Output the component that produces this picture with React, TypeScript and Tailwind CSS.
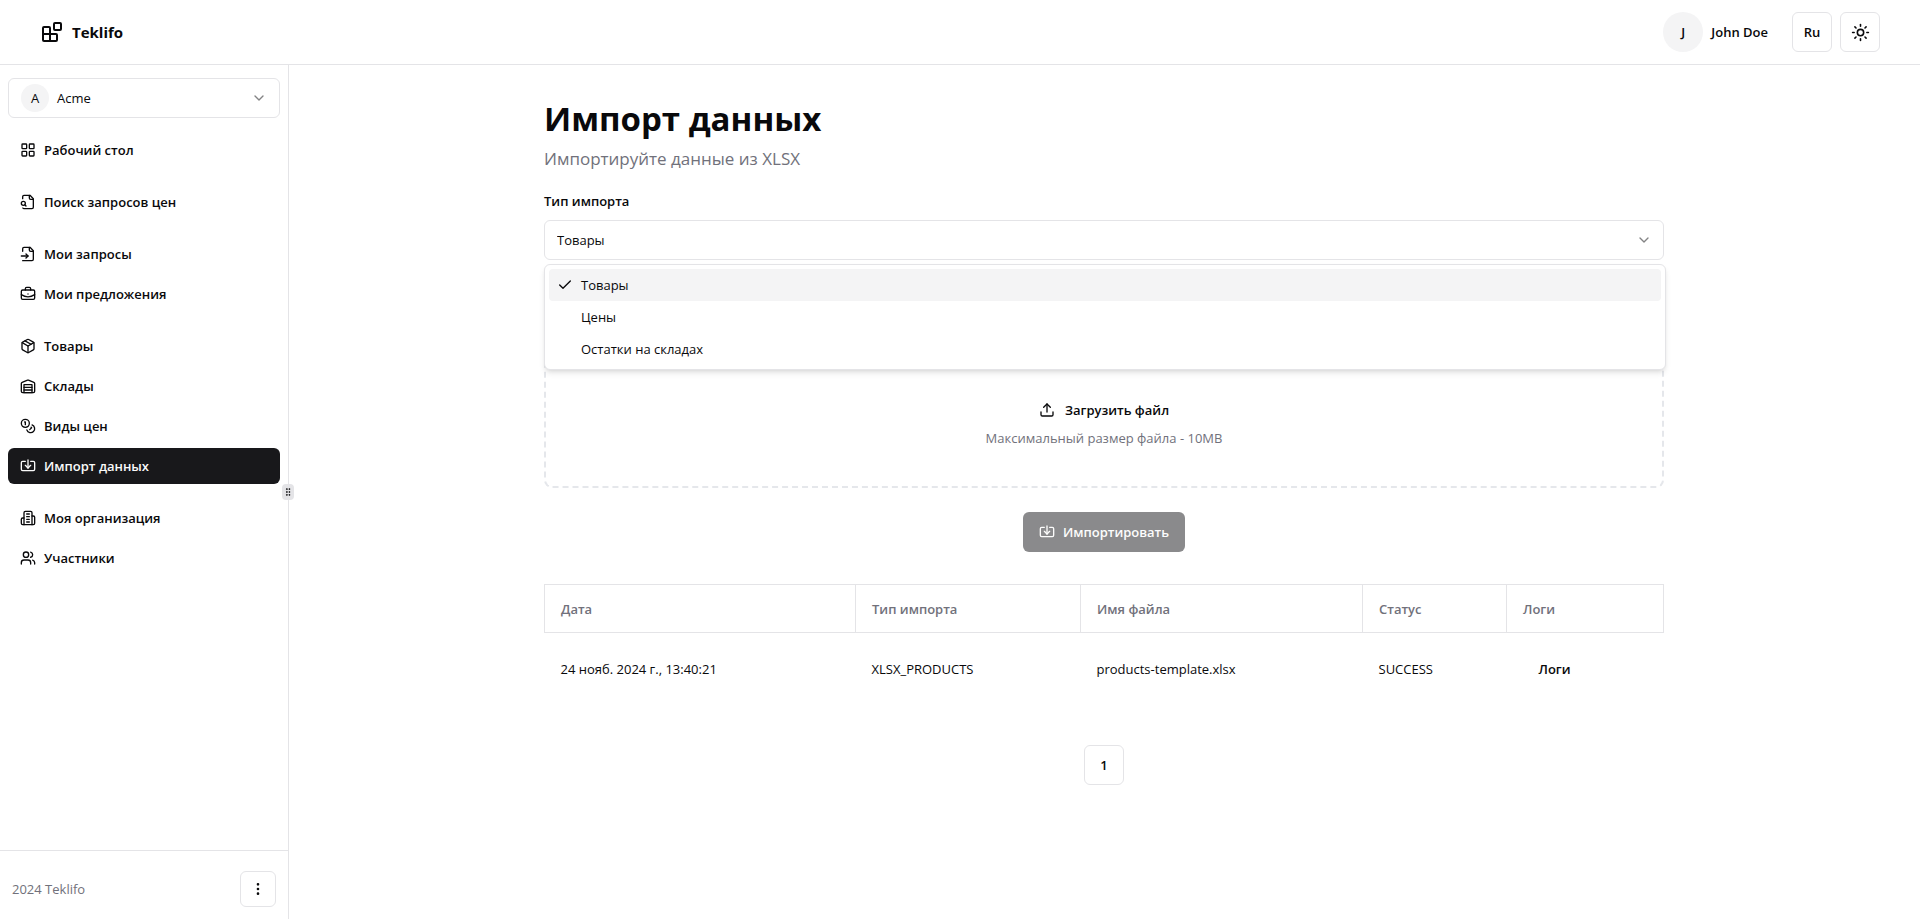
import type { ReactNode, SVGProps } from "react";
import {
  BriefcaseBusiness,
  Check,
  ChevronDown,
  EllipsisVertical,
  GripVertical,
  Import,
  LayoutGrid,
  Sun,
  Upload,
  Users,
} from "lucide-react";

function Icon({ children, ...props }: SVGProps<SVGSVGElement> & { children: ReactNode }) {
  return (
    <svg
      viewBox="0 0 24 24"
      fill="none"
      stroke="currentColor"
      strokeWidth={2}
      strokeLinecap="round"
      strokeLinejoin="round"
      aria-hidden="true"
      {...props}
    >
      {children}
    </svg>
  );
}

function BlocksIcon({ className }: { className?: string }) {
  return (
    <Icon className={className}>
      <rect width="7" height="7" x="14" y="3" rx="1" />
      <path d="M10 21V8a1 1 0 0 0-1-1H4a1 1 0 0 0-1 1v12a1 1 0 0 0 1 1h12a1 1 0 0 0 1-1v-5a1 1 0 0 0-1-1H3" />
    </Icon>
  );
}

function FileSearchIcon({ className }: { className?: string }) {
  return (
    <Icon className={className}>
      <path d="M14 2v4a2 2 0 0 0 2 2h4" />
      <path d="M4.268 21a2 2 0 0 0 1.727 1H18a2 2 0 0 0 2-2V7l-5-5H6a2 2 0 0 0-2 2v3" />
      <path d="m9 18-1.5-1.5" />
      <circle cx="5" cy="14" r="3" />
    </Icon>
  );
}

function FileInputIcon({ className }: { className?: string }) {
  return (
    <Icon className={className}>
      <path d="M4 22h14a2 2 0 0 0 2-2V7l-5-5H6a2 2 0 0 0-2 2v4" />
      <path d="M14 2v4a2 2 0 0 0 2 2h4" />
      <path d="M2 15h10" />
      <path d="m9 18 3-3-3-3" />
    </Icon>
  );
}

function PackageIcon({ className }: { className?: string }) {
  return (
    <Icon className={className}>
      <path d="m7.5 4.27 9 5.15" />
      <path d="M21 8a2 2 0 0 0-1-1.73l-7-4a2 2 0 0 0-2 0l-7 4A2 2 0 0 0 3 8v8a2 2 0 0 0 1 1.73l7 4a2 2 0 0 0 2 0l7-4A2 2 0 0 0 21 16Z" />
      <path d="m3.3 7 8.7 5 8.7-5" />
      <path d="M12 22V12" />
    </Icon>
  );
}

function WarehouseIcon({ className }: { className?: string }) {
  return (
    <Icon className={className}>
      <path d="M22 8.35V20a2 2 0 0 1-2 2H4a2 2 0 0 1-2-2V8.35A2 2 0 0 1 3.26 6.5l8-3.2a2 2 0 0 1 1.48 0l8 3.2A2 2 0 0 1 22 8.35Z" />
      <path d="M6 18h12" />
      <path d="M6 14h12" />
      <rect width="12" height="12" x="6" y="10" />
    </Icon>
  );
}

function CoinsIcon({ className }: { className?: string }) {
  return (
    <Icon className={className}>
      <circle cx="8" cy="8" r="6" />
      <path d="M18.09 10.37A6 6 0 1 1 10.34 18" />
      <path d="M7 6h1v4" />
      <path d="m16.71 13.88.7.71-2.82 2.82" />
    </Icon>
  );
}

function BuildingIcon({ className }: { className?: string }) {
  return (
    <Icon className={className}>
      <path d="M6 22V4a2 2 0 0 1 2-2h8a2 2 0 0 1 2 2v18Z" />
      <path d="M6 12H4a2 2 0 0 0-2 2v6a2 2 0 0 0 2 2h2" />
      <path d="M18 9h2a2 2 0 0 1 2 2v9a2 2 0 0 1-2 2h-2" />
      <path d="M10 6h4" />
      <path d="M10 10h4" />
      <path d="M10 14h4" />
      <path d="M10 18h4" />
    </Icon>
  );
}

type NavItem = { label: string; icon: (props: { className?: string }) => ReactNode; active?: boolean };

const navGroups: NavItem[][] = [
  [{ label: "Рабочий стол", icon: (p) => <LayoutGrid {...p} /> }],
  [{ label: "Поиск запросов цен", icon: (p) => <FileSearchIcon {...p} /> }],
  [
    { label: "Мои запросы", icon: (p) => <FileInputIcon {...p} /> },
    { label: "Мои предложения", icon: (p) => <BriefcaseBusiness {...p} /> },
  ],
  [
    { label: "Товары", icon: (p) => <PackageIcon {...p} /> },
    { label: "Склады", icon: (p) => <WarehouseIcon {...p} /> },
    { label: "Виды цен", icon: (p) => <CoinsIcon {...p} /> },
    { label: "Импорт данных", icon: (p) => <Import {...p} />, active: true },
  ],
  [
    { label: "Моя организация", icon: (p) => <BuildingIcon {...p} /> },
    { label: "Участники", icon: (p) => <Users {...p} /> },
  ],
];

const importTypes = ["Товары", "Цены", "Остатки на складах"];

const columns = [
  { label: "Дата", width: "w-[311px]" },
  { label: "Тип импорта", width: "w-[225px]" },
  { label: "Имя файла", width: "w-[282px]" },
  { label: "Статус", width: "w-36" },
  { label: "Логи", width: "w-auto" },
];

function Header() {
  return (
    <header className="flex h-[65px] items-center justify-between border-b border-zinc-200 px-10">
      <a href="#" className="flex items-center gap-2 text-[15px] font-bold">
        <BlocksIcon className="size-6" />
        Teklifo
      </a>
      <div className="flex items-center gap-2">
        <button className="mr-4 flex items-center gap-2 font-semibold">
          <span className="flex size-10 items-center justify-center rounded-full bg-zinc-100">J</span>
          John Doe
        </button>
        <button className="size-10 rounded-md border border-zinc-200 font-semibold">Ru</button>
        <button
          aria-label="Тема"
          className="flex size-10 items-center justify-center rounded-md border border-zinc-200"
        >
          <Sun className="size-[19px]" />
        </button>
      </div>
    </header>
  );
}

function Sidebar() {
  return (
    <aside className="relative flex w-[289px] shrink-0 flex-col border-r border-zinc-200">
      <div className="flex grow flex-col gap-3.5 px-2 py-[13px]">
        <button className="flex h-10 items-center gap-2 rounded-md border border-zinc-200 px-3">
          <span className="flex size-7 items-center justify-center rounded-full bg-zinc-100">A</span>
          Acme
          <ChevronDown className="ml-auto size-4 opacity-50" />
        </button>
        <nav className="flex flex-col gap-4">
          {navGroups.map((group, i) => (
            <ul key={i} className="flex flex-col gap-1">
              {group.map(({ label, icon, active }) => (
                <li key={label}>
                  <a
                    href="#"
                    className={
                      active
                        ? "flex h-9 items-center gap-2 rounded-md bg-zinc-900 px-3 font-semibold text-zinc-50"
                        : "flex h-9 items-center gap-2 rounded-md px-3 font-semibold"
                    }
                  >
                    {icon({ className: "size-4" })}
                    {label}
                  </a>
                </li>
              ))}
            </ul>
          ))}
        </nav>
      </div>
      <footer className="flex items-center justify-between border-t border-zinc-200 px-3 pt-5 pb-3 text-zinc-500">
        2024 Teklifo
        <button
          aria-label="Меню"
          className="flex size-9 items-center justify-center rounded-md border border-zinc-200 text-zinc-950"
        >
          <EllipsisVertical className="size-4" />
        </button>
      </footer>
      <div className="absolute top-1/2 -right-1.5 flex h-4 w-3 -translate-y-1/2 items-center justify-center rounded-sm bg-zinc-200">
        <GripVertical className="size-2.5" />
      </div>
    </aside>
  );
}

function ImportTypeSelect() {
  return (
    <div className="mt-[18px]">
      <label htmlFor="import-type" className="block font-semibold">
        Тип импорта
      </label>
      <div className="relative mt-[9px]">
        <select
          id="import-type"
          className="h-10 w-full appearance-none rounded-md border border-zinc-200 bg-white px-3"
        >
          {importTypes.map((type) => (
            <option key={type}>{type}</option>
          ))}
        </select>
        <ChevronDown className="pointer-events-none absolute top-3 right-3 size-4 opacity-50" />
        <ul
          role="listbox"
          aria-label="Тип импорта"
          className="absolute top-11 -right-0.5 left-0 z-10 rounded-md border border-zinc-200 bg-white p-1 shadow-md"
        >
          {importTypes.map((type, i) => (
            <li
              key={type}
              role="option"
              aria-selected={i === 0}
              className={
                i === 0
                  ? "grid h-8 grid-cols-[16px_1fr] items-center gap-2 rounded-sm bg-zinc-100 px-2"
                  : "grid h-8 grid-cols-[16px_1fr] items-center gap-2 rounded-sm px-2"
              }
            >
              <span>{i === 0 && <Check className="size-4" />}</span>
              {type}
            </li>
          ))}
        </ul>
      </div>
    </div>
  );
}

function HistoryTable() {
  return (
    <table className="mt-8 w-full table-fixed border-collapse text-left">
      <thead>
        <tr className="h-12">
          {columns.map(({ label, width }) => (
            <th key={label} className={`${width} border border-zinc-200 px-4 font-semibold text-zinc-500`}>
              {label}
            </th>
          ))}
        </tr>
      </thead>
      <tbody>
        <tr className="h-[72px]">
          <td className="px-4">24 нояб. 2024 г., 13:40:21</td>
          <td className="px-4">XLSX_PRODUCTS</td>
          <td className="px-4">products-template.xlsx</td>
          <td className="px-4">SUCCESS</td>
          <td className="px-4">
            <button className="h-10 px-4 font-semibold">Логи</button>
          </td>
        </tr>
      </tbody>
    </table>
  );
}

export default function App() {
  return (
    <div className="flex min-h-screen flex-col bg-white font-['Open_Sans','Noto_Sans',sans-serif] text-[13px] leading-5 text-zinc-950">
      <Header />
      <div className="flex grow">
        <Sidebar />
        <main className="grow pt-8 pr-[33px] pl-8">
          <div className="mx-auto flex max-w-[1120px] flex-col">
            <h1 className="text-[33px] leading-11 font-bold">Импорт данных</h1>
            <p className="mt-1 text-[17px] leading-7 text-zinc-500">Импортируйте данные из XLSX</p>
            <ImportTypeSelect />
            <div className="mt-[90px] flex flex-col items-center rounded-lg border-2 border-dashed border-gray-200 px-4 pt-10 pb-[38px]">
              <button className="flex h-9 items-center gap-2.5 font-semibold">
                <Upload className="size-4" />
                Загрузить файл
              </button>
              <p className="text-zinc-500">Максимальный размер файла - 10MB</p>
            </div>
            <button
              disabled
              className="mt-6 flex h-10 items-center gap-2 self-center rounded-md bg-zinc-900 px-4 font-semibold text-zinc-50 opacity-50"
            >
              <Import className="size-4" />
              Импортировать
            </button>
            <HistoryTable />
            <nav aria-label="Страницы" className="mt-10 flex justify-center">
              <a
                href="#"
                aria-current="page"
                className="flex size-10 items-center justify-center rounded-md border border-zinc-200 font-semibold"
              >
                1
              </a>
            </nav>
          </div>
        </main>
      </div>
    </div>
  );
}
